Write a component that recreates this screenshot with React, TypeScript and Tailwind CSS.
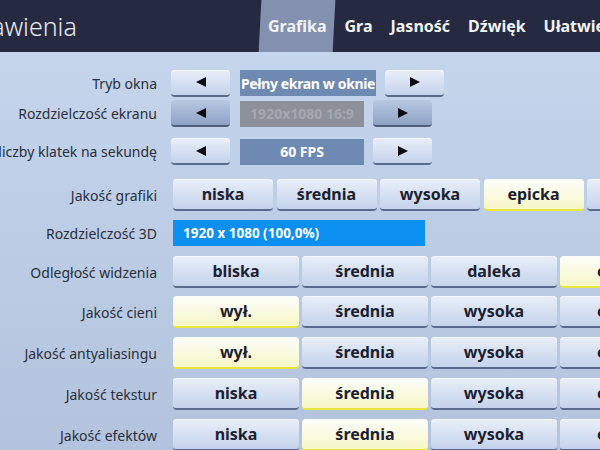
import React from "react";

const tabs = ["Grafika", "Gra", "Jasność", "Dźwięk", "Ułatwienia dostępu"];

function Tri({ dir }: { dir: "l" | "r" }) {
  return (
    <svg width="10" height="10" viewBox="0 0 10 10">
      {dir === "l" ? <polygon points="10,0 10,10 0,5" fill="#0b0d12" /> : <polygon points="0,0 0,10 10,5" fill="#0b0d12" />}
    </svg>
  );
}

const btn = "flex items-center justify-center rounded-[4px] border-b-2 shrink-0 text-[16px] font-bold text-[#1b2031]";
const normal = "bg-linear-to-b from-[#e9eff9] to-[#c4d2ea] border-[#5a6a8c] shadow-[inset_0_1px_0_#f4f7fc]";
const chosen = "bg-linear-to-b from-[#fdfefb] to-[#f6f6c6] border-[#e6e63c]";
const dim = "bg-linear-to-b from-[#b7c7e0] to-[#8fa3c5] border-[#4e5c7b]";

function Label({ text }: { text: string }) {
  return (
    <div className="w-[157px] shrink-0 flex justify-end whitespace-nowrap text-[14px] text-[#2a2f3b]">
      {text}
    </div>
  );
}

function Stepper({ label, value, wide, disabled, top }: { label: string; value: string; wide?: boolean; disabled?: boolean; top: string }) {
  return (
    <div className={`flex items-center ${top}`}>
      <Label text={label} />
      <div className="ml-[14px] flex items-center">
        <div className={`${btn} ${disabled ? dim : normal} w-[59px] h-[27px]`}><Tri dir="l" /></div>
        <div
          className={`ml-[10px] h-[26px] flex items-center justify-center text-[14px] font-bold whitespace-nowrap ${
            wide ? "w-[136px] tracking-[-0.35px]" : "w-[124px]"
          } ${disabled ? "bg-[#8b9099] text-[#a3a8b1]" : "bg-[#6f8ab2] text-white"}`}
        >
          {value}
        </div>
        <div className={`${btn} ${disabled ? dim : normal} ml-[9px] w-[59px] h-[27px]`}><Tri dir="r" /></div>
      </div>
    </div>
  );
}

function Choice({ label, options, sel, w, gap, top }: { label: string; options: string[]; sel: number; w: string; gap: string; top: string }) {
  return (
    <div className={`flex items-center ${top}`}>
      <Label text={label} />
      <div className={`ml-[16px] flex ${gap}`}>
        {options.map((o, i) => (
          <div key={i} className={`${btn} ${i === sel ? chosen : normal} ${w} h-[32px]`}>
            {o}
          </div>
        ))}
      </div>
    </div>
  );
}

export default function App() {
  return (
    <div
      className="w-[600px] h-[450px] overflow-hidden bg-linear-to-b from-[#c6d7ee] to-[#b3c3dd]"
      style={{ fontFamily: '"Noto Sans", "Open Sans", sans-serif' }}
    >
      <div className="h-[52px] bg-[#262a40] flex items-stretch">
        <div className="w-[260px] shrink-0 flex items-center overflow-hidden">
          <span className="ml-[-47px] text-[25px] font-light text-[#e8eaf0] whitespace-nowrap leading-none">Ustawienia</span>
        </div>
        <div className="flex items-stretch whitespace-nowrap">
          {tabs.map((t, i) => (
            <div key={t} className="relative flex items-center px-[8px] mr-[2px]">
              {i === 0 && <div className="absolute inset-0 bg-[#8390ae] -skew-x-3" />}
              <span className="relative text-[16px] font-bold text-[#f2f3f7]">{t}</span>
            </div>
          ))}
        </div>
      </div>

      <Stepper label="Tryb okna" value="Pełny ekran w oknie" wide top="mt-[17px] h-[28px]" />
      <Stepper label="Rozdzielczość ekranu" value="1920x1080 16:9" disabled top="mt-[3px] h-[27px]" />
      <Stepper label="Limit liczby klatek na sekundę" value="60 FPS" top="mt-[11px] h-[27px]" />

      <Choice label="Jakość grafiki" options={["niska", "średnia", "wysoka", "epicka", "auto"]} sel={3} w="w-[100px]" gap="gap-[3.5px]" top="mt-[14px]" />

      <div className="flex items-center mt-[9px]">
        <Label text="Rozdzielczość 3D" />
        <div className="ml-[16px] w-[252px] h-[26px] bg-[#0b8ff0] flex items-center pl-[10px] text-[13.5px] font-bold text-white whitespace-nowrap">
          1920 x 1080 (100,0%)
        </div>
      </div>

      <Choice label="Odległość widzenia" options={["bliska", "średnia", "daleka", "epicka"]} sel={3} w="w-[126px]" gap="gap-[3px]" top="mt-[10px]" />
      <Choice label="Jakość cieni" options={["wył.", "średnia", "wysoka", "epicka"]} sel={0} w="w-[126px]" gap="gap-[3px]" top="mt-[8px]" />
      <Choice label="Jakość antyaliasingu" options={["wył.", "średnia", "wysoka", "epicka"]} sel={0} w="w-[126px]" gap="gap-[3px]" top="mt-[9px]" />
      <Choice label="Jakość tekstur" options={["niska", "średnia", "wysoka", "epicka"]} sel={1} w="w-[126px]" gap="gap-[3px]" top="mt-[9px]" />
      <Choice label="Jakość efektów" options={["niska", "średnia", "wysoka", "epicka"]} sel={1} w="w-[126px]" gap="gap-[3px]" top="mt-[9px]" />
    </div>
  );
}
